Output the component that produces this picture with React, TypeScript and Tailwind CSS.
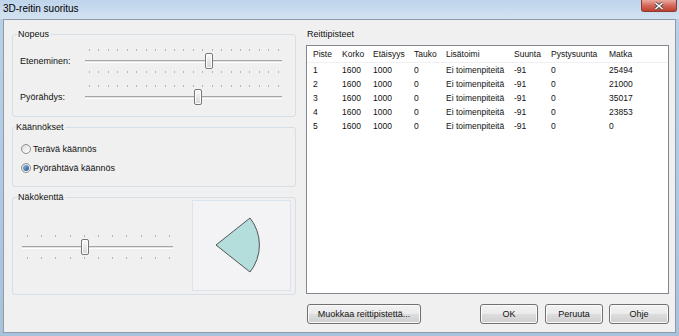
import React from "react";

type SliderProps = {
  className: string;
  thumbClass: string;
  tickRowClass: string;
  count: number;
  bottom?: boolean;
};

function Ticks({ count, rowClass, hidden }: { count: number; rowClass: string; hidden?: boolean }) {
  return (
    <div className={`flex h-[2px] justify-between ${rowClass} ${hidden ? "invisible" : ""}`}>
      {Array.from({ length: count }).map((_, i) => (
        <span key={i} className="h-[2px] w-px bg-[#b4b4b4]" />
      ))}
    </div>
  );
}

function Slider({ className, thumbClass, tickRowClass, count, bottom }: SliderProps) {
  return (
    <div className={`flex flex-col ${className}`}>
      <Ticks count={count} rowClass={tickRowClass} />
      <div className="relative mt-[2px] flex h-[16px] items-center">
        <div className="h-[3px] w-full border-t border-b border-t-[#a6a6a6] border-b-white bg-[#e3e3e3]" />
        <div
          className={`absolute top-0 h-[16px] w-[8px] rounded-[2px] border border-[#777777] bg-linear-to-b from-[#fbfbfb] to-[#d6d6d6] shadow-[inset_0_0_0_1px_#ffffff] ${thumbClass}`}
        />
      </div>
      <div className="mt-[2px]">
        <Ticks count={count} rowClass={tickRowClass} hidden={!bottom} />
      </div>
    </div>
  );
}

function Radio({ label, checked }: { label: string; checked?: boolean }) {
  return (
    <div className="flex h-[14px] items-center gap-[2px]">
      <span className="flex h-[10px] w-[10px] items-center justify-center rounded-full border border-[#8e8f8f] bg-linear-to-br from-[#dcdcdc] to-[#ffffff]">
        {checked && (
          <span className="h-[6px] w-[6px] rounded-full bg-linear-to-br from-[#9cc2e8] to-[#1d4d86]" />
        )}
      </span>
      <span>{label}</span>
    </div>
  );
}

const rows = [
  ["1", "1600", "1000", "0", "Ei toimenpiteitä", "-91", "0", "25494"],
  ["2", "1600", "1000", "0", "Ei toimenpiteitä", "-91", "0", "21000"],
  ["3", "1600", "1000", "0", "Ei toimenpiteitä", "-91", "0", "35017"],
  ["4", "1600", "1000", "0", "Ei toimenpiteitä", "-91", "0", "23853"],
  ["5", "1600", "1000", "0", "Ei toimenpiteitä", "-91", "0", "0"],
];

const headers = ["Piste", "Korko", "Etäisyys", "Tauko", "Lisätoimi", "Suunta", "Pystysuunta", "Matka"];
const colW = ["w-[29px]", "w-[31px]", "w-[41px]", "w-[32px]", "w-[68px]", "w-[37px]", "w-[58px]", "flex-1"];

function Button({ label, className }: { label: string; className: string }) {
  return (
    <div
      className={`flex h-[20px] items-center justify-center rounded-[3px] border border-[#707070] bg-[linear-gradient(to_bottom,#f2f2f2_0%,#ebebeb_50%,#dddddd_50%,#cfcfcf_100%)] shadow-[inset_0_0_0_1px_#fbfbfb] ${className}`}
    >
      {label}
    </div>
  );
}

export default function App() {
  return (
    <div className="flex h-[336px] w-[679px] flex-col bg-linear-to-b from-[#b9d0e8] to-[#a9c2dc] font-['Liberation_Sans',Arial,sans-serif] text-[9px] leading-[11px] text-[#111111]">
      {/* title bar */}
      <div className="flex h-[19px] items-start justify-between bg-linear-to-b from-[#bed4eb] to-[#d3e2f1]">
        <span className="pl-[3px] pt-[3px] text-[10px] leading-[11px] text-black">3D-reitin suoritus</span>
        <div className="mr-[2px] flex h-[12px] w-[36px] items-center justify-center rounded-b-[3px] border border-t-0 border-[#8a3c33] bg-linear-to-b from-[#e9aa9f] via-[#d5685b] to-[#c0412f]">
          <svg width="10" height="8" viewBox="0 0 10 8">
            <path d="M1.5 1 L8.5 7 M8.5 1 L1.5 7" stroke="#4a4a4a" strokeWidth="3" />
            <path d="M1.5 1 L8.5 7 M8.5 1 L1.5 7" stroke="#ffffff" strokeWidth="1.5" />
          </svg>
        </div>
      </div>

      {/* client */}
      <div className="mx-[3px] h-[314px] border border-[#8d9cab] bg-[#f0f0f0]">
        <div className="flex items-start pl-[8px] pt-[9px]">
          {/* left column */}
          <div className="flex w-[284px] flex-col">
            <fieldset className="rounded-[3px] border border-[#d5dfe5]">
              <legend className="ml-[4px] px-px">Nopeus</legend>
              <div className="pb-[7px] pl-[7px] pt-[9px]">
                <div className="flex items-center">
                  <span className="w-[65px]">Eteneminen:</span>
                  <Slider className="w-[197px]" thumbClass="left-[120px]" tickRowClass="pl-[4px] pr-[3px]" count={21} bottom />
                </div>
                <div className="mt-[12px] flex items-center">
                  <span className="w-[65px]">Pyörähdys:</span>
                  <Slider className="w-[197px]" thumbClass="left-[109px]" tickRowClass="pl-[4px] pr-[3px]" count={21} />
                </div>
              </div>
            </fieldset>

            <fieldset className="mt-[5px] rounded-[3px] border border-[#d5dfe5]">
              <legend className="ml-[2px] px-px">Käännökset</legend>
              <div className="pb-[11px] pl-[8px] pt-[9px]">
                <Radio label="Terävä käännös" />
                <div className="mt-[5px]">
                  <Radio label="Pyörähtävä käännös" checked />
                </div>
              </div>
            </fieldset>

            <fieldset className="mt-[5px] rounded-[3px] border border-[#d5dfe5]">
              <legend className="ml-[4px] px-px">Näkökenttä</legend>
              <div className="-mt-[3px] flex items-start pb-[3px] pl-[9px] pr-[4px]">
                <div className="mt-[35px]">
                  <Slider className="w-[151px]" thumbClass="left-[59px]" tickRowClass="pl-[5px] pr-[3px]" count={11} bottom />
                </div>
                <div className="ml-[19px] h-[91px] w-[99px] border border-[#dbe4ec] bg-[#f3f3f5]">
                  <svg width="97" height="89" viewBox="0 0 97 89">
                    <path
                      d="M23 44 L57 17 A43.4 43.4 0 0 1 57 71 Z"
                      fill="#b3dedb"
                      stroke="#555555"
                      strokeWidth="1"
                      strokeLinejoin="round"
                    />
                  </svg>
                </div>
              </div>
            </fieldset>
          </div>

          {/* right column */}
          <div className="ml-[10px] flex w-[363px] flex-col">
            <div className="pl-px">Reittipisteet</div>
            <div className="mt-[5px] h-[249px] border border-[#828790] bg-white text-[8.5px]">
              <div className="flex h-[17px] items-center border-b border-[#eef0f3]">
                {headers.map((h, i) => (
                  <div key={h} className={`${colW[i]} pl-[6px] whitespace-nowrap`}>
                    {h}
                  </div>
                ))}
              </div>
              {rows.map((r, ri) => (
                <div key={ri} className="flex h-[14px] items-center">
                  {r.map((c, i) => (
                    <div key={i} className={`${colW[i]} pl-[6px] whitespace-nowrap`}>
                      {c}
                    </div>
                  ))}
                </div>
              ))}
            </div>
            <div className="mt-[10px] flex">
              <Button label="Muokkaa reittipistettä..." className="ml-px w-[114px]" />
              <Button label="OK" className="ml-auto w-[58px]" />
              <Button label="Peruuta" className="ml-[7px] w-[58px]" />
              <Button label="Ohje" className="ml-[6px] w-[60px]" />
            </div>
          </div>
        </div>
      </div>
    </div>
  );
}
